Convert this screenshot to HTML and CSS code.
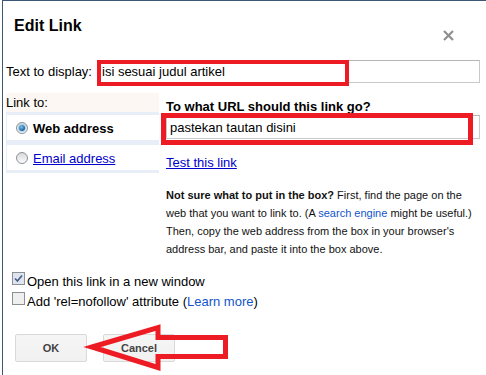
FILE: index.html
```html
<!DOCTYPE html>
<html lang="en">

<head>
    <meta charset="UTF-8">
    <meta name="viewport" content="width=device-width, initial-scale=1.0">
    <title>Edit Link</title>
    <link rel="stylesheet" href="styles.css">
</head>

<body>
    <div class="dialog">
        <div class="dialog_head">
            <h1 class="title">Edit Link</h1>
            <svg class="close" width="11" height="11" viewBox="0 0 11 11">
                <path d="M1 1 L10 10 M10 1 L1 10" stroke="#8f8f8f" stroke-width="2.2" />
            </svg>
        </div>

        <div class="display_row">
            <label for="display" class="display_label">Text to display:</label>
            <input type="text" id="display" class="field" value="isi sesuai judul artikel">
        </div>

        <div class="link_row">
            <div class="link_to">
                <div class="link_to_label">Link to:</div>
                <div class="options">
                    <div class="option"><span class="radio on"></span><b>Web address</b></div>
                    <div class="option"><span class="radio"></span><a href="#">Email address</a></div>
                </div>
            </div>
            <div class="url_box">
                <div class="url_title">To what URL should this link go?</div>
                <input type="text" id="url" class="field url_field" value="pastekan tautan disini">
                <a class="test_link" href="#">Test this link</a>
                <p class="hint">
                    <b>Not sure what to put in the box?</b> First, find the page on the<br>
                    web that you want to link to. (A <a href="#">search engine</a> might be useful.)<br>
                    Then, copy the web address from the box in your browser's<br>
                    address bar, and paste it into the box above.
                </p>
            </div>
        </div>

        <div class="check_row first">
            <svg class="check" width="13" height="13" viewBox="0 0 13 13">
                <rect x="0.5" y="0.5" width="12" height="12" fill="#dfe5f0" stroke="#8c8f95" />
                <path d="M3 6.5 L5.4 9 L10 3.5" fill="none" stroke="#4b5f88" stroke-width="1.7" />
            </svg>
            <span>Open this link in a new window</span>
        </div>
        <div class="check_row">
            <svg class="check" width="13" height="13" viewBox="0 0 13 13">
                <rect x="0.5" y="0.5" width="12" height="12" fill="#efefef" stroke="#8c8f95" />
            </svg>
            <span>Add 'rel=nofollow' attribute (<a href="#">Learn more</a>)</span>
        </div>

        <div class="buttons">
            <button class="btn">OK</button>
            <button class="btn">Cancel</button>
        </div>
    </div>

    <!-- red annotation marks over the dialog -->
    <svg class="marks" width="486" height="375" viewBox="0 0 486 375">
        <rect x="99" y="62" width="248" height="22" fill="none" stroke="#ed1c24" stroke-width="4" />
        <rect x="163.5" y="115.5" width="307" height="27" fill="none" stroke="#ed1c24" stroke-width="5" />
        <polygon points="92,347 158,327.5 158,337.5 225.5,337.5 225.5,356.5 158,356.5 158,367.5"
            fill="none" stroke="#ed1c24" stroke-width="5" stroke-linejoin="miter" />
    </svg>
</body>

</html>
```

FILE: styles.css
```css
* {
    margin: 0px;
    padding: 0px;
    box-sizing: border-box;
}

body {
    font-family: "Liberation Sans", Arial, sans-serif;
    font-size: 13px;
    color: #000;
    background-color: #fff;
    overflow: hidden;
}

.dialog {
    margin-left: 2px;
    height: 375px;
    border-left: 1px solid #3b5877;
    border-top: 1px solid #3b5877;
}

.dialog_head {
    display: flex;
    justify-content: space-between;
    align-items: flex-start;
    height: 59px;
    padding: 15px 32px 0 11px;
}

.title {
    font-size: 16px;
    line-height: 20px;
    font-weight: bold;
}

.close {
    margin-top: 14px;
}

.display_row {
    display: flex;
    align-items: center;
    padding-left: 3px;
}

.display_label {
    width: 91px;
}

.field {
    height: 23px;
    border: 1px solid #c9c9c9;
    border-top-color: #b5b5b5;
    padding: 0 4px;
    font-family: "Liberation Sans", Arial, sans-serif;
    font-size: 13px;
    color: #000;
    outline: none;
}

#display {
    width: 383px;
}

.link_row {
    display: flex;
    margin-top: 10px;
}

.link_to {
    width: 153px;
    margin-left: 3px;
}

.link_to_label {
    height: 19px;
    line-height: 19px;
    background-color: #fcf7f2;
}

.options {
    display: flex;
    flex-direction: column;
    gap: 5px;
    padding: 3px 0 3px 1px;
    background-color: #e8eef8;
}

.option {
    display: flex;
    align-items: center;
    gap: 5px;
    height: 25px;
    padding: 1px 0 0 9px;
    background-color: #fff;
}

.option a {
    color: #0000cc;
}

.radio {
    width: 12px;
    height: 12px;
    border-radius: 50%;
    border: 1px solid #8a929c;
    background: linear-gradient(#d8d8d8, #fbfbfb);
    display: flex;
    justify-content: center;
    align-items: center;
}

.radio.on::after {
    content: "";
    width: 6px;
    height: 6px;
    border-radius: 50%;
    background: radial-gradient(circle at 40% 35%, #7cc3f0, #1d5d98 70%);
    box-shadow: 0 0 0 1px #a9d3f0;
}

.url_box {
    margin-left: 7px;
}

.url_title {
    font-weight: bold;
    line-height: 16px;
    margin-top: 6px;
}

.url_field {
    display: block;
    width: 314px;
    height: 24px;
    padding-left: 3px;
}

.test_link {
    display: block;
    width: fit-content;
    margin-top: 16px;
    line-height: 16px;
    color: #0000cc;
}

.hint {
    margin-top: 15px;
    font-size: 11px;
    line-height: 18px;
    color: #111;
}

.hint a {
    color: #1155cc;
    text-decoration: none;
}

.check_row {
    display: flex;
    align-items: center;
    gap: 2px;
    height: 20px;
    padding-left: 9px;
}

.check_row.first {
    margin-top: 13px;
}

.check {
    margin-bottom: 5px;
}

.check_row a {
    color: #1155cc;
    text-decoration: none;
}

.buttons {
    display: flex;
    gap: 16px;
    margin-top: 23px;
    padding-left: 12px;
}

.btn {
    width: 72px;
    height: 28px;
    border: 1px solid #d9d9d9;
    border-radius: 2px;
    background: linear-gradient(#f5f5f5, #f1f1f1);
    font-family: "Liberation Sans", Arial, sans-serif;
    font-size: 11px;
    font-weight: bold;
    color: #444;
}

.marks {
    position: absolute;
    left: 0;
    top: 0;
    pointer-events: none;
}
```
